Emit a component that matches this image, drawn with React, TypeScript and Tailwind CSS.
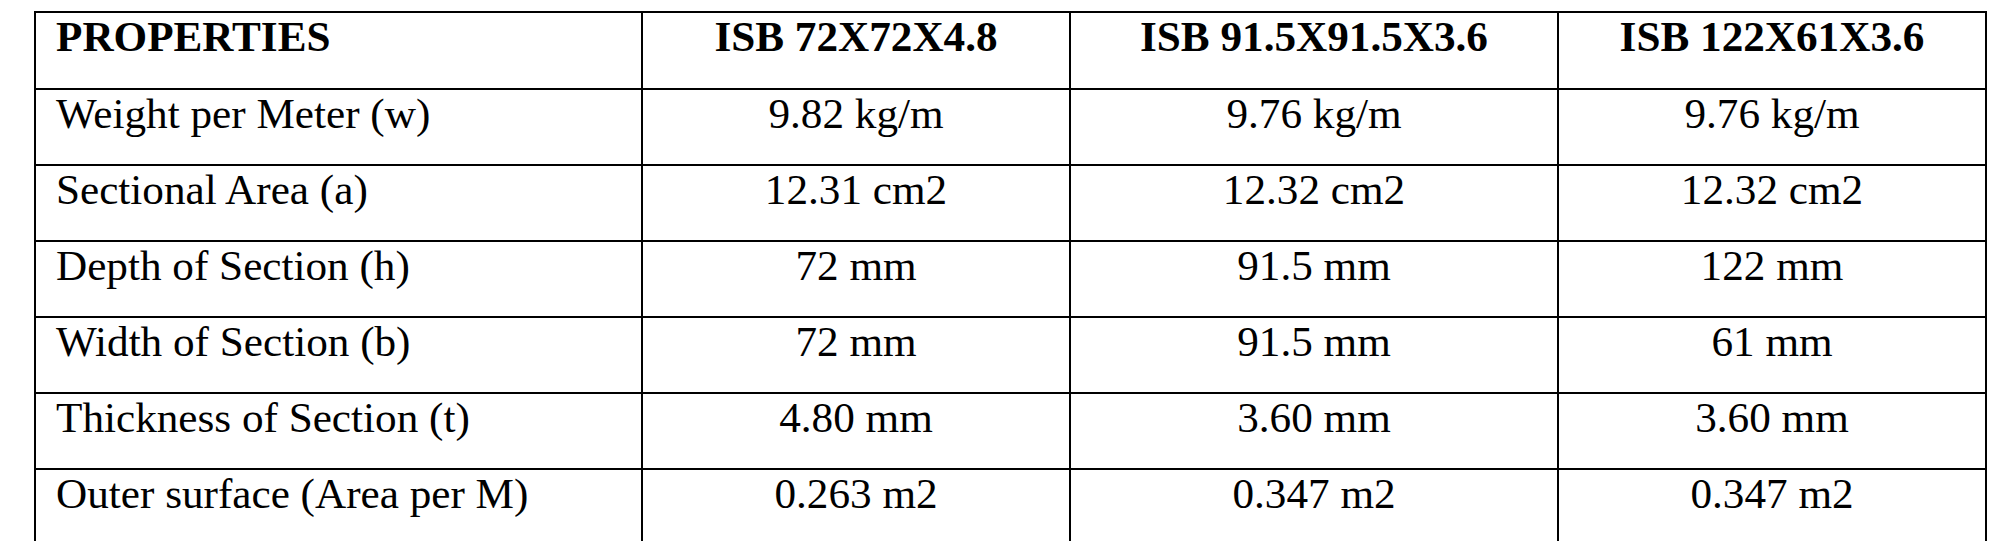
const rows: string[][] = [
  ['Weight per Meter (w)', '9.82 kg/m', '9.76 kg/m', '9.76 kg/m'],
  ['Sectional Area (a)', '12.31 cm2', '12.32 cm2', '12.32 cm2'],
  ['Depth of Section (h)', '72 mm', '91.5 mm', '122 mm'],
  ['Width of Section (b)', '72 mm', '91.5 mm', '61 mm'],
  ['Thickness of Section (t)', '4.80 mm', '3.60 mm', '3.60 mm'],
  ['Outer surface (Area per M)', '0.263 m2', '0.347 m2', '0.347 m2'],
];

const headers = ['PROPERTIES', 'ISB 72X72X4.8', 'ISB 91.5X91.5X3.6', 'ISB 122X61X3.6'];

const App = () => {
  return (
    <div className="bg-white min-h-screen pt-[11px] pl-[34px] font-['Liberation_Serif','Times_New_Roman',serif] text-black">
      <table className="table-fixed border-collapse w-[1953px] text-[43.2px] leading-[48px]">
        <colgroup>
          <col className="w-[607px]" />
          <col className="w-[428px]" />
          <col className="w-[488px]" />
          <col className="w-[428px]" />
        </colgroup>
        <thead>
          <tr className="h-[77px]">
            {headers.map((h, i) => (
              <th
                key={h}
                className={`border-2 border-black align-top font-bold ${
                  i === 0 ? 'text-left pl-[20px]' : 'text-center'
                }`}
              >
                {h}
              </th>
            ))}
          </tr>
        </thead>
        <tbody>
          {rows.map((row) => (
            <tr key={row[0]} className="h-[76px]">
              {row.map((cell, i) => (
                <td
                  key={i}
                  className={`border-2 border-black align-top font-normal ${
                    i === 0 ? 'text-left pl-[20px]' : 'text-center'
                  }`}
                >
                  {cell}
                </td>
              ))}
            </tr>
          ))}
        </tbody>
      </table>
    </div>
  );
};

export default App;
